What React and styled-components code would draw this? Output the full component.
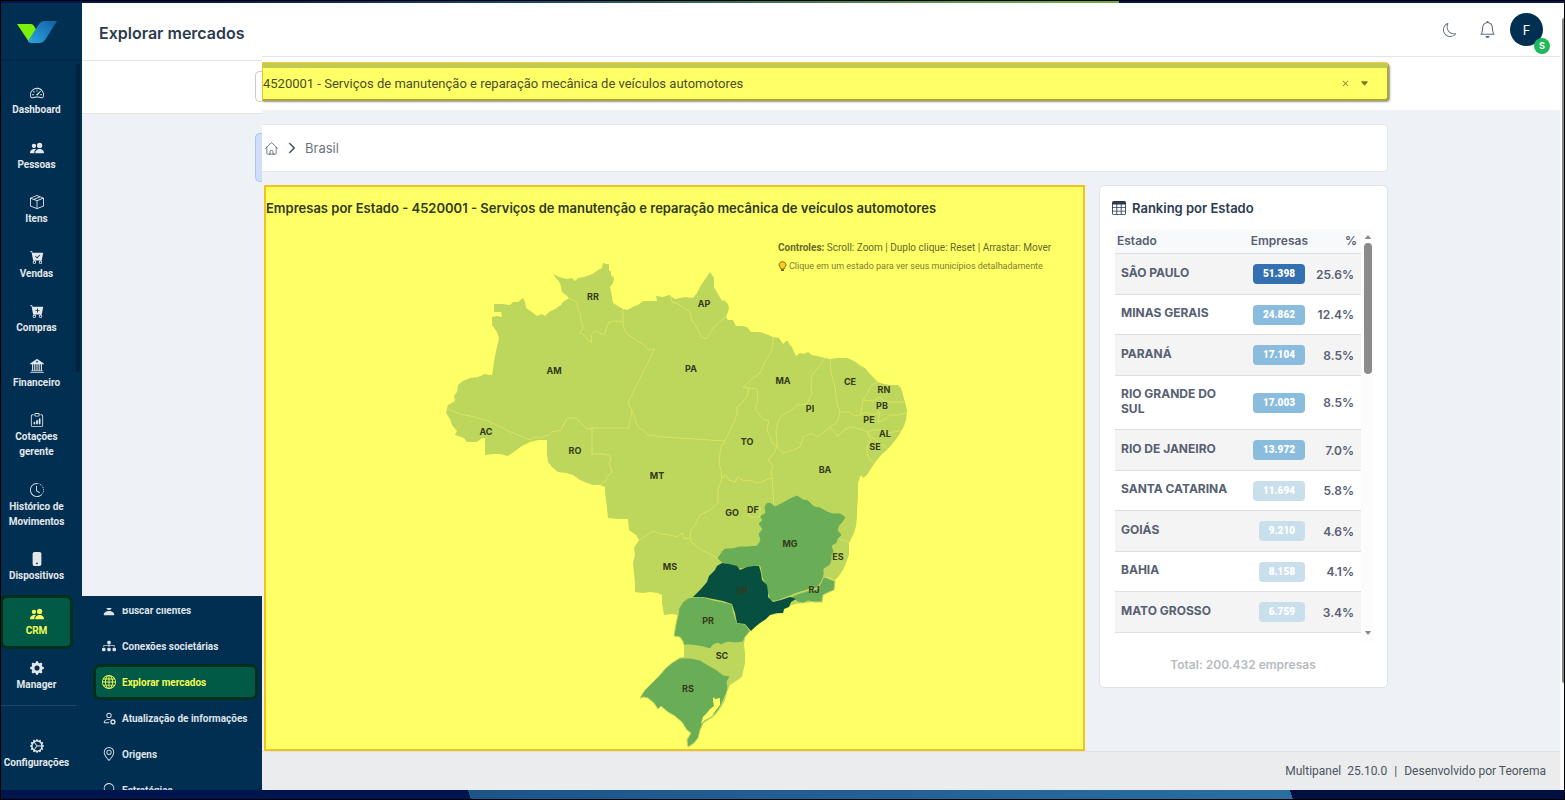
import React from "react";
import styled, { createGlobalStyle } from "styled-components";
import {
	BsSpeedometer2,
	BsPeopleFill,
	BsBoxSeam,
	BsCartCheckFill,
	BsCartPlusFill,
	BsBank2,
	BsClipboardData,
	BsClockHistory,
	BsPhoneFill,
	BsGearFill,
	BsGearWideConnected,
	BsPersonFill,
	BsDiagram3Fill,
	BsGlobe,
	BsPersonGear,
	BsGeoAlt,
	BsLightbulb,
	BsMoon,
	BsBell,
	BsChevronRight,
	BsTable,
	BsX,
	BsCaretDownFill,
	BsCaretUpFill,
} from "react-icons/bs";
import { HiOutlineHome } from "react-icons/hi2";

const colors = {
	navy: "#002f51",
	page: "#eef1f6",
	line: "#e3e5e9",
	ink: "#2c3a50",
	slate: "#566072",
	yellow: "#ffff66",
	gold: "#eec41f",
	green: "#005a46",
	darkGreen: "#00301d",
	land: "#bdd65c",
	border: "#d9e562",
	mid: "#6aad57",
	deep: "#07503f",
};

const compactFont = `Roboto, "Liberation Sans", sans-serif`;

const mainMenu = [
	{ label: "Dashboard", icon: BsSpeedometer2 },
	{ label: "Pessoas", icon: BsPeopleFill },
	{ label: "Itens", icon: BsBoxSeam },
	{ label: "Vendas", icon: BsCartCheckFill },
	{ label: "Compras", icon: BsCartPlusFill },
	{ label: "Financeiro", icon: BsBank2 },
	{ label: "Cotações gerente", icon: BsClipboardData },
	{ label: "Histórico de Movimentos", icon: BsClockHistory },
	{ label: "Dispositivos", icon: BsPhoneFill },
	{ label: "CRM", icon: BsPeopleFill, active: true },
	{ label: "Manager", icon: BsGearFill },
];

const crmMenu = [
	{ label: "Buscar clientes", icon: BsPersonFill },
	{ label: "Conexões societárias", icon: BsDiagram3Fill },
	{ label: "Explorar mercados", icon: BsGlobe, active: true },
	{ label: "Atualização de informações", icon: BsPersonGear },
	{ label: "Origens", icon: BsGeoAlt },
	{ label: "Estratégias", icon: BsLightbulb },
];

const ranking = [
	{ state: "SÃO PAULO", total: "51.398", share: "25.6%", color: "#3470b1" },
	{ state: "MINAS GERAIS", total: "24.862", share: "12.4%", color: "#8abcde" },
	{ state: "PARANÁ", total: "17.104", share: "8.5%", color: "#8abcde" },
	{ state: "RIO GRANDE DO SUL", total: "17.003", share: "8.5%", color: "#8abcde" },
	{ state: "RIO DE JANEIRO", total: "13.972", share: "7.0%", color: "#8abcde" },
	{ state: "SANTA CATARINA", total: "11.694", share: "5.8%", color: "#c9dfec" },
	{ state: "GOIÁS", total: "9.210", share: "4.6%", color: "#c9dfec" },
	{ state: "BAHIA", total: "8.158", share: "4.1%", color: "#c9dfec" },
	{ state: "MATO GROSSO", total: "6.759", share: "3.4%", color: "#c9dfec" },
];

const country =
	"M553 274L557 276L562 278L568 279L572 278L575 281L578 278L584 277L590 275L594 273L598 270L602 268L603 263L606 264L609 264L609 270L611 272L611 275L614 278L613 283L610 287L611 291L612 297L613 303L618 306L623 309L627 310L631 308L635 306L638 305L643 301L650 301L657 301L656 296L663 297L669 295L675 299L680 298L685 297L693 298L697 293L701 285L706 278L710 272L714 278L714 287L718 294L722 301L724 300L728 304L729 308L728 312L726 317L728 320L733 320L736 326L742 326L747 327L751 332L760 332L766 334L773 337L779 338L781 341L783 344L786 341L788 341L789 344L792 347L794 352L796 356L800 353L804 354L808 352L812 355L817 356L825 358L830 359L838 358L847 358L852 360L857 363L861 366L865 368L869 373L873 377L878 382L884 384L890 385L898 385L901 388L903 395L905 402L907 410L906 420L904 426L902 430L897 438L893 443L887 450L882 454L877 460L874 464L870 470L867 475L863 478L861 475L860 477L858 483L858 497L857 510L857 517L856 526L854 533L849 543L849 555L846 563L843 570L838 577L835 580L834 590L829 592L823 595L822 602L814 602L803 603L795 604L790 606L785 608L783 613L777 614L770 615L766 619L760 623L754 628L750 630L745 637L744 645L745 653L745 663L743 672L742 677L736 681L730 685L727 692L725 700L722 706L717 713L712 718L703 723L700 730L698 738L694 743L688 747L687 740L691 733L687 730L682 722L675 716L668 712L661 706L658 709L654 703L648 698L644 697L640 698L645 690L653 682L660 675L666 668L672 663L678 659L684 657L684 645L680 637L674 636L676 624L678 615L672 614L664 615L662 603L662 595L658 593L650 592L643 593L635 592L635 583L634 573L633 563L635 555L634 548L639 540L636 535L629 530L628 519L618 519L608 518L607 508L606 500L605 492L605 487L600 485L593 485L587 483L580 480L573 475L566 473L558 472L553 468L548 462L547 454L547 447L547 440L538 440L530 442L522 446L515 451L508 456L500 454L494 454L485 455L485 438L481 439L477 442L472 442L467 442L464 438L455 435L457 431L452 425L450 419L446 413L448 405L455 401L454 396L457 392L458 385L463 381L470 378L478 377L485 374L489 375L492 375L495 356L499 338L497 332L492 325L492 317L497 316L502 317L501 312L494 312L494 304L502 304L510 305L513 302L518 302L523 298L525 302L526 308L532 312L537 316L542 314L545 316L549 312L555 309L561 305L563 302L569 298L566 295L562 292L561 287L560 283L556 278Z";

const statesMid = [
	// MG
	"M717 558L722 551L725 548L732 548L740 546L748 546L757 545L760 540L758 534L762 529L758 524L762 520L759 516L765 513L764 507L766 503L770 502L775 506L783 502L790 498L797 495L803 499L808 500L814 506L820 507L827 511L833 513L840 513L846 517L843 522L840 525L838 530L842 535L838 539L837 543L832 546L834 551L832 555L832 560L830 565L824 569L824 575L822 581L817 588L807 590L797 593L787 597L777 601L770 601L768 594L766 587L762 577L760 566L750 567L740 569L730 565L722 563Z",
	// RJ
	"M787 599L797 594L807 591L817 589L821 583L824 576L829 579L835 581L834 590L829 592L823 595L822 602L814 602L808 601L803 603L797 602L796 600Z",
	// PR
	"M693 597L703 597L713 600L723 602L732 604L734 614L737 623L745 624L750 631L745 637L743 642L735 643L729 642L725 643L721 645L718 643L713 645L710 649L704 647L698 646L691 645L684 645L683 641L680 637L674 636L676 624L678 615L679 608L683 602L688 598Z",
	// RS
	"M680 658L690 658L700 660L708 665L717 670L723 675L730 676L727 682L728 687L726 694L723 701L720 707L715 714L709 718L703 723L700 730L698 738L694 743L688 747L687 740L691 733L687 730L682 722L675 716L668 712L661 706L658 709L654 703L648 698L644 697L640 698L645 690L653 682L660 675L666 668L672 663Z",
];

const stateDeep =
	"M722 563L729 564L737 566L740 570L747 567L753 566L759 566L761 573L762 580L767 585L768 592L768 597L773 602L781 600L790 597L796 599L791 602L789 607L784 609L783 613L777 613L770 615L766 619L760 623L755 627L751 631L745 624L737 623L735 613L732 604L723 601L713 599L703 597L693 597L701 589L707 582L709 576L715 570L717 566Z";

const lagoon = "M713 697L715 699L720 698L720 705L716 710L712 716L705 720L701 724L703 717L707 713L710 709L714 706L713 701Z";

const divisions = [
	"M569 298L577 302L578 309L580 313L581 321L583 327L580 333L584 335L587 339L592 343L591 335L594 332L597 331L600 334L605 334L606 329L609 322L616 321L623 322L623 309",
	"M623 322L624 329L627 334L632 337L637 341L643 344L649 350L655 349L653 352L628 403L632 411L630 420L629 428L592 428L587 429L582 424L576 418L567 418L564 424L561 430L552 432L550 435L545 436L541 438L535 437L530 440L513 433L488 421L475 417L460 414L448 409",
	"M592 428L592 454L602 454L609 455L611 459L609 463L612 472L608 476L605 482L600 485",
	"M632 411L635 418L638 427L643 430L648 435L664 437L680 438L725 441",
	"M670 295L672 302L678 304L685 308L690 313L692 320L697 328L702 338L707 338L713 328L719 322L726 317",
	"M773 337L773 344L771 352L766 360L763 367L759 374L753 378L743 387L749 389L747 397L742 403L737 407L737 413L735 420L730 430L725 441L721 447L720 453L719 464L721 470L722 478L718 490L718 503L710 510L700 515L696 523L690 532L691 542L700 549L717 558",
	"M743 387L757 389L758 400L755 410L760 415L764 420L769 420L767 430L770 437L772 443L777 446L775 452L768 460L773 466L771 472L772 478L773 490L774 505",
	"M825 358L820 365L812 375L811 385L812 393L807 404L797 405L790 411L782 415L778 422L776 430L777 446L783 453L793 450L800 447L803 437L812 433L817 437L824 432L830 427",
	"M830 359L831 373L835 387L837 403L840 412L837 422L830 427L838 436L845 429L853 427L860 429L867 432L873 430L880 430L890 433L902 430",
	"M840 412L850 412L854 416L860 415L862 407L863 400L868 393L870 387L875 383L878 382",
	"M863 400L873 401L880 397L884 401L890 402L905 402",
	"M860 415L866 412L873 415L880 412L878 422L884 420L890 415L898 415L906 413",
	"M867 432L873 438L880 443L888 449",
	"M867 432L871 440L867 446L867 453L870 460L874 463",
	"M722 478L725 475L729 480L735 482L738 477L744 481L750 480L757 483L764 481L768 479L772 478",
	"M639 540L646 536L653 531L661 534L670 535L677 537L682 533L684 539L690 538",
	"M840 540L845 540L849 543",
	"M824 577L830 578L835 581",
	"M749 507H760V517H749Z",
];

const stateLabels = [
	["RR", 593, 300], ["AP", 704, 307], ["AM", 554, 374], ["PA", 691, 372],
	["MA", 783, 384], ["CE", 850, 385], ["RN", 884, 393], ["PB", 882, 409],
	["PI", 810, 412], ["PE", 869, 423], ["AL", 885, 437], ["SE", 875, 450],
	["AC", 486, 435], ["RO", 575, 454], ["TO", 747, 445], ["BA", 825, 473],
	["MT", 657, 479], ["GO", 732, 516], ["DF", 753, 513], ["MG", 790, 547],
	["ES", 838, 560], ["MS", 670, 570], ["SP", 742, 594], ["RJ", 814, 593],
	["PR", 708, 624], ["SC", 722, 659], ["RS", 688, 692],
];

const BrazilMap = () => (
	<MapSvg viewBox="266 220 817 529" role="img" aria-label="Empresas por Estado">
		<path d={country} fill={colors.land} />
		<g fill={colors.mid} stroke={colors.land} strokeWidth="1">
			{statesMid.map((d) => (
				<path key={d} d={d} />
			))}
		</g>
		<path d={stateDeep} fill={colors.deep} />
		<path d={lagoon} fill={colors.yellow} />
		<g fill="none" stroke={colors.border} strokeWidth="1" strokeLinejoin="round">
			{divisions.map((d) => (
				<path key={d} d={d} />
			))}
		</g>
		{stateLabels.map(([name, x, y]) => (
			<MapLabel key={name} x={x} y={y}>
				{name}
			</MapLabel>
		))}
	</MapSvg>
);

const Logo = () => (
	<svg width="40" height="24" viewBox="0 0 40 24" aria-label="Multipanel">
		<defs>
			<linearGradient id="blade" x1="0" y1="1" x2="1" y2="0">
				<stop offset="0" stopColor="#2ba6e0" />
				<stop offset="1" stopColor="#1260a5" />
			</linearGradient>
		</defs>
		<path d="M0 4H14Q16 4 17 6L20 11L12 22Z" fill="#7cf00a" />
		<path d="M40 1H27Q24 1 22 4L11 21Q12 23 14 23H23Q26 23 28 20Z" fill="url(#blade)" />
	</svg>
);

const Bulb = () => (
	<svg width="9" height="11" viewBox="0 0 9 11" aria-hidden="true">
		<path
			d="M4.500 .7C2.300 .7 1 2.200 1 4C1 5.700 2.600 6.400 2.900 8H6.100C6.400 6.400 8 5.700 8 4C8 2.200 6.700 .7 4.500 .7Z"
			fill="#ffc81e"
			stroke="#6b5208"
			strokeWidth=".8"
		/>
		<path d="M3 8.400H6V10H3Z" fill="#5c5530" />
	</svg>
);

const Ranking = () => (
	<RankingCard>
		<RankingTitle>
			<BsTable size={14} /> Ranking por Estado
		</RankingTitle>
		<RankingScroll>
			<Table>
				<colgroup>
					<StateCol />
					<TotalCol />
					<col />
				</colgroup>
				<thead>
					<tr>
						<Th>Estado</Th>
						<Th $end>Empresas</Th>
						<Th $end>%</Th>
					</tr>
				</thead>
				<tbody>
					{ranking.map((row) => (
						<Row key={row.state}>
							<StateCell>{row.state}</StateCell>
							<Td>
								<Badge $color={row.color}>{row.total}</Badge>
							</Td>
							<Td>{row.share}</Td>
						</Row>
					))}
				</tbody>
			</Table>
			<ScrollTrack>
				<BsCaretUpFill size={8} />
				<ScrollThumb />
				<BsCaretDownFill size={8} />
			</ScrollTrack>
		</RankingScroll>
		<Total>Total: 200.432 empresas</Total>
	</RankingCard>
);

const App = () => {
	return (
		<>
			<GlobalStyle />
			<Frame>
				<TopStrip />
				<Shell>
					<Sidebar>
						<Brand href="#">
							<Logo />
						</Brand>
						<MainNav>
							{mainMenu.map(({ label, icon: Icon, active }) => (
								<NavLink key={label} href="#" $active={active}>
									<Icon size={14} />
									<span>{label}</span>
								</NavLink>
							))}
						</MainNav>
						<SidebarThumb />
						<SidebarFooter>
							<NavLink href="#">
								<BsGearWideConnected size={14} />
								<span>Configurações</span>
							</NavLink>
						</SidebarFooter>
					</Sidebar>

					<SideColumn>
						<PageHeader>
							<PageTitle>Explorar mercados</PageTitle>
						</PageHeader>
						<SideFilter>
							<FieldEdge />
						</SideFilter>
						<SideBody>
							<CrumbEdge />
						</SideBody>
						<Submenu>
							<SubmenuList>
								{crmMenu.map(({ label, icon: Icon, active }) => (
									<SubLink key={label} href="#" $active={active}>
										<Icon size={14} />
										<span>{label}</span>
									</SubLink>
								))}
							</SubmenuList>
						</Submenu>
					</SideColumn>

					<Main>
						<Toolbar>
							<IconButton aria-label="Tema escuro">
								<BsMoon size={14} />
							</IconButton>
							<IconButton aria-label="Notificações">
								<BsBell size={17} />
							</IconButton>
							<Avatar aria-label="Conta">
								F<Status>S</Status>
							</Avatar>
						</Toolbar>
						<FilterBar>
							<Field>
								<Select aria-label="Atividade" defaultValue="4520001">
									<option value="4520001">
										4520001 - Serviços de manutenção e reparação mecânica de veículos automotores
									</option>
								</Select>
								<ClearButton aria-label="Limpar">
									<BsX size={13} />
								</ClearButton>
								<BsCaretDownFill size={9} />
							</Field>
						</FilterBar>
						<Content>
							<Breadcrumb aria-label="Localização">
								<CrumbLink href="#" aria-label="Início">
									<HiOutlineHome size={15} />
								</CrumbLink>
								<BsChevronRight size={12} strokeWidth={1} />
								<CrumbLink href="#">Brasil</CrumbLink>
							</Breadcrumb>
							<Columns>
								<MapCard>
									<MapTitle>
										Empresas por Estado - 4520001 - Serviços de manutenção e reparação mecânica de
										veículos automotores
									</MapTitle>
									<BrazilMap />
									<MapHelp>
										<p>
											<strong>Controles:</strong> Scroll: Zoom | Duplo clique: Reset | Arrastar: Mover
										</p>
										<Hint>
											<Bulb />
											Clique em um estado para ver seus municípios detalhadamente
										</Hint>
									</MapHelp>
								</MapCard>
								<Ranking />
							</Columns>
						</Content>
						<Footer>
							<span>Multipanel&nbsp; 25.10.0</span>
							<span>|</span>
							<span>Desenvolvido por Teorema</span>
						</Footer>
					</Main>
					<PageScroll>
						<PageThumb />
					</PageScroll>
				</Shell>
				<BottomStrip />
			</Frame>
		</>
	);
};

const GlobalStyle = createGlobalStyle`
	* {
		box-sizing: border-box;
	}
	body {
		margin: 0;
		font-family: Inter, "Liberation Sans", sans-serif;
		color: ${colors.ink};
	}
	p, h1, h2 {
		margin: 0;
	}
	a {
		color: inherit;
		text-decoration: none;
	}
	button {
		border: 0;
		padding: 0;
		background: none;
		color: inherit;
		font: inherit;
	}
	svg {
		flex-shrink: 0;
	}
`;

const Frame = styled.div`
	display: flex;
	flex-direction: column;
	height: 100vh;
	border: 1px solid #000;
	overflow: hidden;
`;
const TopStrip = styled.div`
	height: 2px;
	flex-shrink: 0;
	background: linear-gradient(90deg, #03164d 0 12%, #1c4a68 35%, #6fa843 68% 71.5%, #03164d 71.5%);
`;
const BottomStrip = styled.div`
	height: 9px;
	flex-shrink: 0;
	background: linear-gradient(72deg, #00154e 0 30%, #1c5488 30%, #2b6ea0 82.5%, #000f3f 82.5%);
`;
const Shell = styled.div`
	display: flex;
	flex: 1;
	min-height: 0;
`;

const Sidebar = styled.aside`
	position: relative;
	display: flex;
	flex-direction: column;
	flex: 0 0 81px;
	background: ${colors.navy};
	color: #e4e7ea;
`;
const Brand = styled.a`
	display: flex;
	justify-content: center;
	align-items: center;
	height: 58px;
	padding: 2px 10px 0 0;
	border-bottom: 2px solid #00284a;
`;
const MainNav = styled.nav`
	display: flex;
	flex-direction: column;
	justify-content: space-between;
	width: 75px;
	height: 645px;
	padding: 16px 6px 5px 2px;
	border-bottom: 1px solid #1f4866;
`;
const NavLink = styled.a`
	display: flex;
	flex-direction: column;
	align-items: center;
	gap: 2px;
	padding: 9px 0 8px;
	border-radius: 4px;
	font-family: ${compactFont};
	font-size: 10px;
	line-height: 15px;
	font-weight: 700;
	text-align: center;
	color: ${(props) => (props.$active ? "#f6fb55" : "inherit")};
	background: ${(props) => (props.$active ? colors.green : "none")};
	box-shadow: ${(props) => (props.$active ? `0 0 0 3px ${colors.darkGreen}` : "none")};
`;
const SidebarThumb = styled.div`
	position: absolute;
	top: 61px;
	right: 2px;
	width: 4px;
	height: 308px;
	border-radius: 2px;
	background: #00243f;
`;
const SidebarFooter = styled.div`
	width: 71px;
	padding-top: 24px;
`;

const SideColumn = styled.div`
	display: flex;
	flex-direction: column;
	flex: 0 0 180px;
	min-width: 0;
	background: ${colors.page};
`;
const PageHeader = styled.header`
	display: flex;
	align-items: center;
	height: 58px;
	padding: 2px 0 0 17px;
	background: #fff;
	border-bottom: 1px solid ${colors.line};
`;
const PageTitle = styled.h1`
	font-size: 16px;
	font-weight: 600;
`;
const SideFilter = styled.div`
	display: flex;
	justify-content: flex-end;
	height: 53px;
	padding-top: 10px;
	background: #fff;
	border-bottom: 1px solid ${colors.line};
`;
const FieldEdge = styled.div`
	width: 7px;
	height: 31px;
	border: 1px solid #c6cad3;
	border-right: 0;
	border-radius: 5px 0 0 5px;
`;
const SideBody = styled.div`
	display: flex;
	justify-content: flex-end;
	flex: 1;
	padding-top: 19px;
`;
const CrumbEdge = styled.div`
	width: 7px;
	height: 49px;
	border: 1px solid #a9c6f7;
	border-right: 0;
	border-radius: 5px 0 0 5px;
	background: #cfdffb;
`;
const Submenu = styled.nav`
	height: 194px;
	padding: 12px 2px 0 9px;
	background: ${colors.navy};
`;
const SubmenuList = styled.div`
	display: flex;
	flex-direction: column;
	justify-content: center;
	gap: 6px;
	height: 182px;
	padding: 2px 5px 0;
	overflow: hidden;
`;
const SubLink = styled.a`
	display: flex;
	align-items: center;
	gap: 6px;
	height: 30px;
	flex-shrink: 0;
	padding-left: 6px;
	border-radius: 4px;
	font-family: ${compactFont};
	font-size: 10px;
	font-weight: 700;
	white-space: nowrap;
	color: ${(props) => (props.$active ? "#f6fb55" : "#dfe3e8")};
	background: ${(props) => (props.$active ? colors.green : "none")};
	box-shadow: ${(props) => (props.$active ? `0 0 0 3px ${colors.darkGreen}` : "none")};
`;

const Main = styled.main`
	display: flex;
	flex-direction: column;
	flex: 1;
	min-width: 0;
	background: ${colors.page};
`;
const Toolbar = styled.div`
	display: flex;
	justify-content: flex-end;
	align-items: center;
	gap: 22px;
	height: 54px;
	flex-shrink: 0;
	padding-right: 17px;
	background: #fff;
	border-bottom: 1px solid ${colors.line};
`;
const IconButton = styled.button`
	display: flex;
	color: #5f6b7d;
`;
const Avatar = styled.button`
	position: relative;
	width: 33px;
	height: 33px;
	margin-left: -8px;
	border-radius: 50%;
	background: ${colors.navy};
	color: #fff;
	font-size: 13px;
`;
const Status = styled.span`
	position: absolute;
	right: -7px;
	bottom: -8px;
	width: 16px;
	height: 16px;
	border-radius: 50%;
	background: #20b858;
	font-size: 9px;
	line-height: 16px;
	font-weight: 700;
`;
const FilterBar = styled.div`
	height: 53px;
	flex-shrink: 0;
	padding: 6px 171px 0 0;
	background: #fff;
`;
const Field = styled.div`
	display: flex;
	align-items: center;
	gap: 8px;
	height: 38px;
	padding-right: 18px;
	background: ${colors.yellow};
	border: 2px solid #b3a52b;
	border-top: 5px solid #bfca4f;
	border-left: 1px solid ${colors.gold};
	border-radius: 0 4px 4px 0;
	box-shadow: 1px 1px 2px #8a97a8, 0 -1px 0 #f8cf3c;
	color: #7b7a2c;
`;
const Select = styled.select`
	flex: 1;
	min-width: 0;
	padding: 0;
	border: 0;
	appearance: none;
	background: none;
	color: #4b4f2a;
	font-family: ${compactFont};
	font-size: 13px;
`;
const ClearButton = styled.button`
	display: flex;
`;
const Content = styled.div`
	display: flex;
	flex-direction: column;
	flex: 1;
	gap: 13px;
	padding: 14px 172px 0 0;
`;
const Breadcrumb = styled.nav`
	display: flex;
	align-items: center;
	gap: 7px;
	height: 48px;
	padding-left: 2px;
	background: #fff;
	border: 1px solid #e4e7ec;
	border-left: 0;
	border-radius: 0 4px 4px 0;
`;
const CrumbLink = styled.a`
	display: flex;
	font-size: 13px;
	color: #6c7583;
`;
const Columns = styled.div`
	display: flex;
	align-items: flex-start;
	gap: 14px;
	padding-left: 2px;
`;
const MapCard = styled.section`
	position: relative;
	flex: 1;
	min-width: 0;
	background: ${colors.yellow};
	border: 2px solid ${colors.gold};
`;
const MapTitle = styled.h2`
	padding-top: 9px;
	font-size: 13px;
	line-height: 24px;
	font-weight: 600;
	color: #303a1c;
`;
const MapSvg = styled.svg`
	display: block;
	width: 100%;
	height: 529px;
`;
const MapLabel = styled.text`
	font-size: 9px;
	font-weight: 700;
	text-anchor: middle;
	fill: #33391a;
`;
const MapHelp = styled.div`
	position: absolute;
	top: 52px;
	right: 29px;
	width: 276px;
	font-family: ${compactFont};
	font-size: 10px;
	line-height: 18px;
	color: #66692c;
	white-space: nowrap;
`;
const Hint = styled.p`
	display: flex;
	align-items: center;
	gap: 2px;
	font-size: 9px;
	color: #7d8033;
`;

const RankingCard = styled.section`
	flex: 0 0 289px;
	padding: 11px 13px 10px 12px;
	background: #fff;
	border: 1px solid #dfe2e8;
	border-radius: 5px;
`;
const RankingTitle = styled.h2`
	display: flex;
	align-items: center;
	gap: 6px;
	margin-bottom: 10px;
	font-size: 13px;
	line-height: 22px;
	font-weight: 600;
`;
const RankingScroll = styled.div`
	display: flex;
	height: 412px;
	padding-left: 3px;
`;
const Table = styled.table`
	flex: 1;
	align-self: flex-start;
	table-layout: fixed;
	border-collapse: collapse;
	font-size: 12px;
	font-weight: 600;
	color: ${colors.slate};
`;
const StateCol = styled.col`
	width: 129px;
`;
const TotalCol = styled.col`
	width: 68px;
`;
const Th = styled.th`
	height: 24px;
	padding: 0 4px 0 2px;
	background: #f8f9fb;
	border-bottom: 1px solid #dcdfe4;
	font-weight: 600;
	text-align: ${(props) => (props.$end ? "right" : "left")};
`;
const Row = styled.tr`
	height: 40px;
	border-bottom: 1px solid #dddfe2;

	&:nth-child(odd) {
		height: 41px;
		background: #f4f4f4;
	}
`;
const Td = styled.td`
	padding: 1px 7px 0 0;
	text-align: right;
`;
const StateCell = styled(Td)`
	padding: 10px 8px 13px 6px;
	font-weight: 700;
	line-height: 15px;
	text-align: left;
`;
const Badge = styled.span`
	display: inline-block;
	padding: 0 10px;
	border-radius: 4px;
	background: ${(props) => props.$color};
	color: #fff;
	font-family: ${compactFont};
	font-size: 10px;
	line-height: 20px;
	font-weight: 900;
`;
const ScrollTrack = styled.div`
	display: flex;
	flex-direction: column;
	align-items: center;
	gap: 2px;
	width: 13px;
	padding: 4px 0;
	background: #fcfcfc;
	color: #8b8b8b;
`;
const ScrollThumb = styled.div`
	width: 8px;
	height: 131px;
	margin-bottom: auto;
	border-radius: 4px;
	background: #8b8b8b;
`;
const Total = styled.p`
	padding-top: 12px;
	font-size: 12px;
	line-height: 24px;
	font-weight: 600;
	text-align: center;
	color: #b7bbc1;
`;

const Footer = styled.footer`
	display: flex;
	justify-content: flex-end;
	align-items: center;
	gap: 7px;
	height: 39px;
	flex-shrink: 0;
	padding-right: 14px;
	border-top: 1px solid #dde1e8;
	background: #ebecee;
	font-family: ${compactFont};
	font-size: 12px;
	color: #4c5460;
`;
const PageScroll = styled.div`
	flex: 0 0 4px;
	padding: 15px 0 0 2px;
	background: #fcfcfc;
`;
const PageThumb = styled.div`
	height: 665px;
	border-radius: 3px 0 0 3px;
	background: #858585;
`;

export default App;
